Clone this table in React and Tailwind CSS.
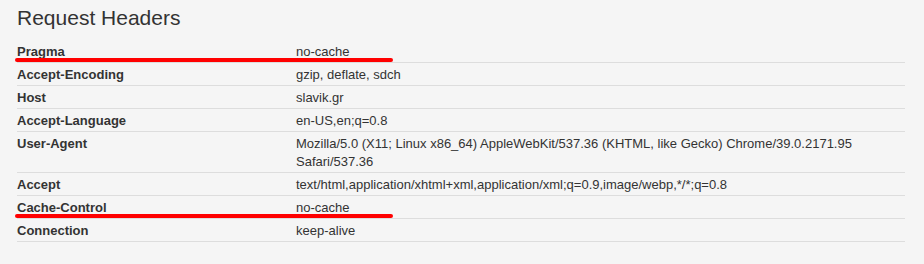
// Request headers table (devtools-like)

const HEADERS = [
  { key: "Pragma", value: "no-cache", mark: true },
  { key: "Accept-Encoding", value: "gzip, deflate, sdch" },
  { key: "Host", value: "slavik.gr" },
  { key: "Accept-Language", value: "en-US,en;q=0.8" },
  {
    key: "User-Agent",
    value:
      "Mozilla/5.0 (X11; Linux x86_64) AppleWebKit/537.36 (KHTML, like Gecko) Chrome/39.0.2171.95 Safari/537.36",
  },
  {
    key: "Accept",
    value:
      "text/html,application/xhtml+xml,application/xml;q=0.9,image/webp,*/*;q=0.8",
  },
  { key: "Cache-Control", value: "no-cache", mark: true },
  { key: "Connection", value: "keep-alive" },
];

export default function App() {
  return (
    <div
      className="w-[924px] h-[264px] bg-[#f5f5f5] pl-[17px] pt-[5px] text-[#333]"
      style={{ fontFamily: '"Liberation Sans", Arial, sans-serif' }}
    >
      <h2 className="text-[21px] leading-[26px] font-normal text-[#333] mb-[9px]">
        Request Headers
      </h2>

      <div className="w-[888px]">
        {HEADERS.map((h) => (
          <div key={h.key} className="relative flex border-b border-[#ddd]">
            <div className="w-[279px] shrink-0 pt-[3px] pb-px text-[13px] leading-[18px] font-bold">
              {h.key}
            </div>
            <div className="flex-1 pt-[3px] pb-px text-[13px] leading-[18px] pr-[50px]">
              {h.value}
            </div>
            {/* red annotation line */}
            {h.mark && (
              <div className="absolute left-[-2px] w-[378px] bottom-0 h-[4px] bg-[#ff0000] rounded-sm" />
            )}
          </div>
        ))}
      </div>
    </div>
  );
}
